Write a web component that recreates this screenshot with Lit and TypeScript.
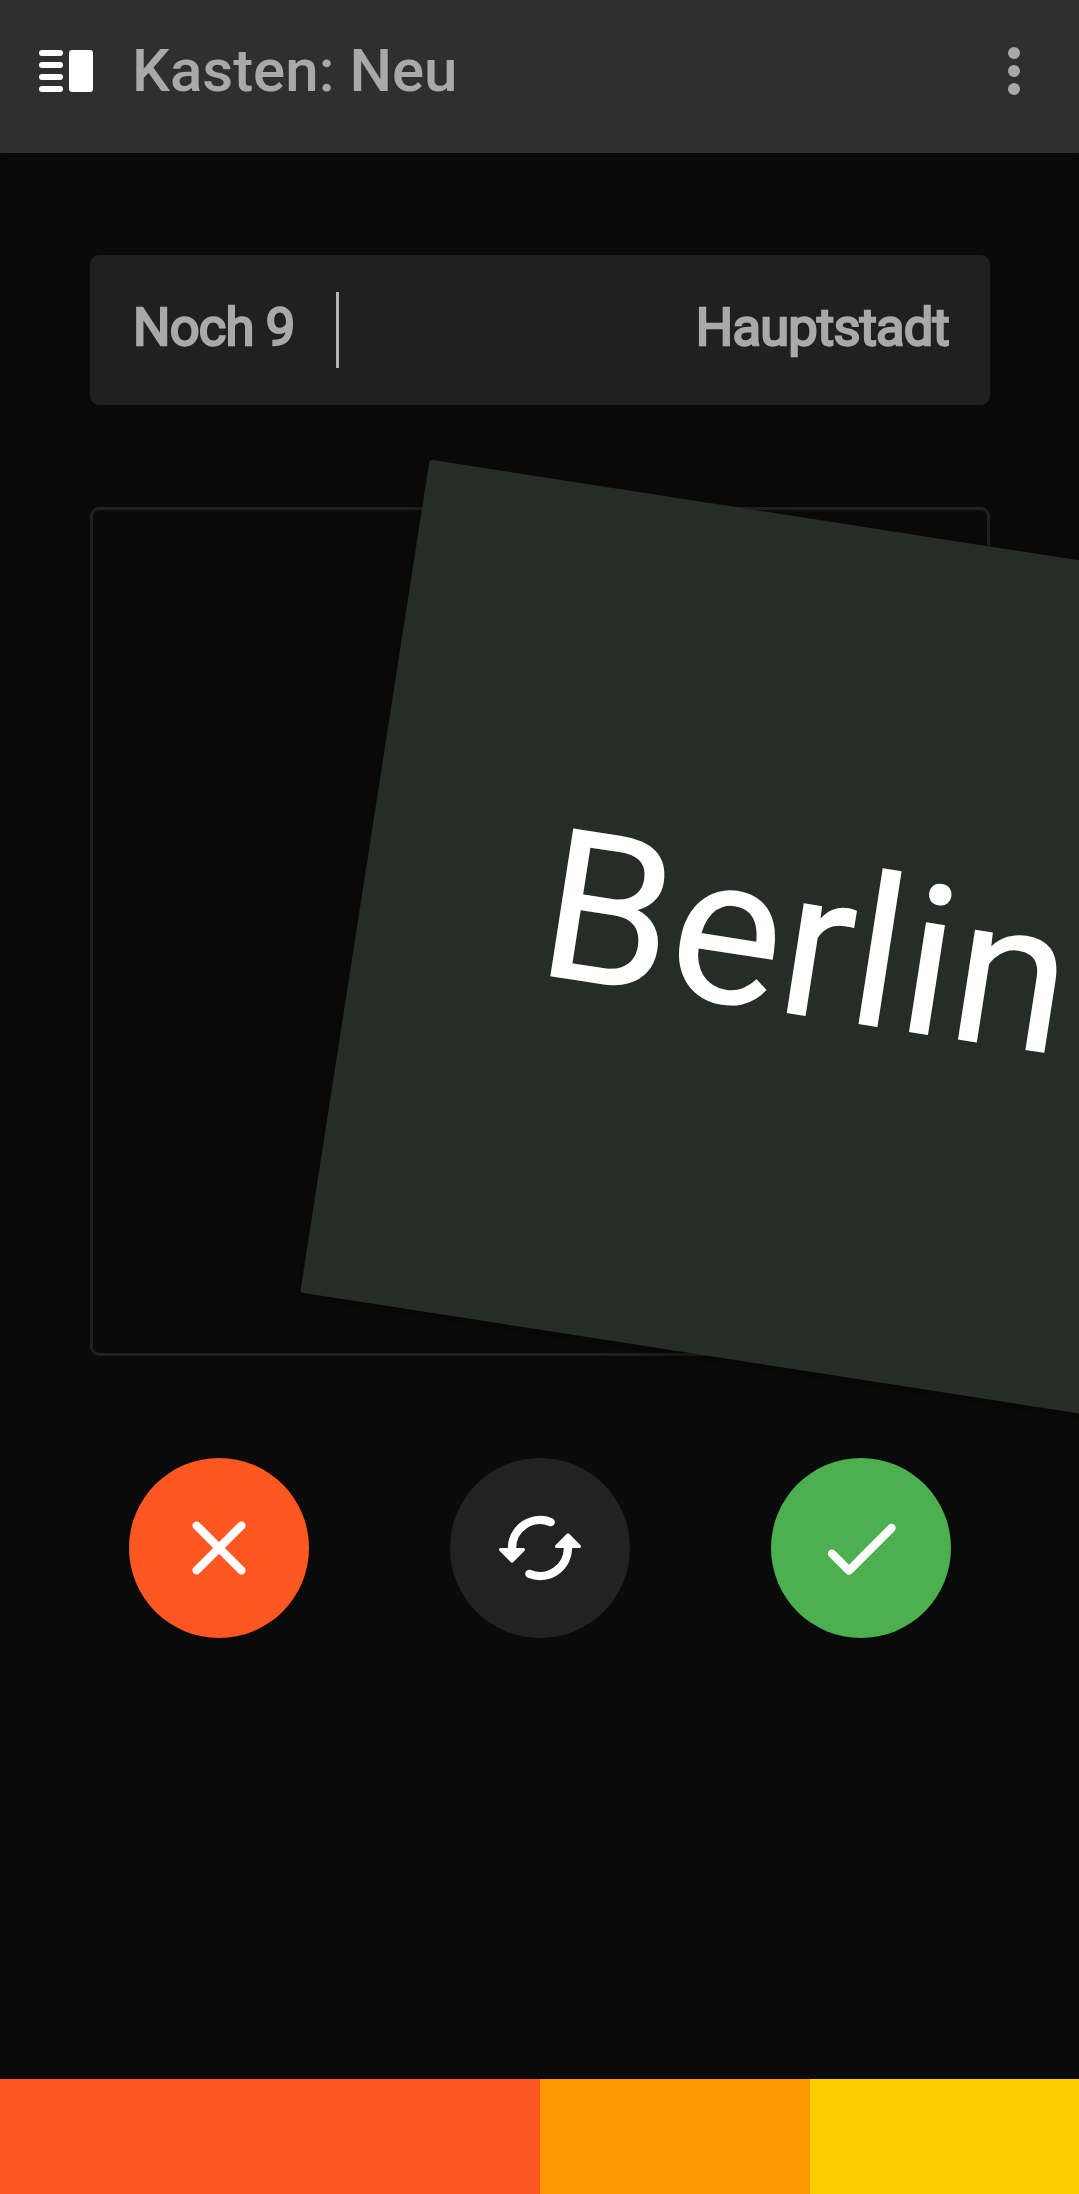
import { LitElement, html, css, svg } from "lit";
import { customElement, property } from "lit/decorators.js";

const icons = {
  cross: svg`<path class="line" d="M-22.4-22.4 22.4 22.4M22.4-22.4-22.4 22.4"/>`,
  flip: svg`
    <path class="line" d="M-28 2V0A28 28 0 0 1 10.6-25.9"/>
    <path class="line" d="M28-2V0A28 28 0 0 1-10.6 25.9"/>
    <path class="head" d="M-39.4 1.6H-16.6L-28 13Z"/>
    <path class="head" d="M39.4-1.6H16.6L28-13Z"/>`,
  check: svg`<path class="line" d="M-29 5.6-12 22.6 30.5-20"/>`,
};

@customElement("round-button")
export class RoundButton extends LitElement {
  @property() icon: keyof typeof icons = "cross";
  @property() label = "";

  static styles = css`
    :host {
      display: block;
      width: 180px;
      height: 180px;
    }
    .button {
      display: flex;
      align-items: center;
      justify-content: center;
      width: 100%;
      height: 100%;
      padding: 0;
      border: 0;
      border-radius: 50%;
      background: var(--fill);
    }
    .line {
      fill: none;
      stroke: #fff;
      stroke-width: 8.4;
      stroke-linecap: round;
      stroke-linejoin: round;
    }
    .head {
      fill: #fff;
      stroke: #fff;
      stroke-width: 3.2;
      stroke-linejoin: round;
    }
  `;

  render() {
    return html`<button class="button" aria-label=${this.label}>
      <svg width="108" height="108" viewBox="-54 -54 108 108">${icons[this.icon]}</svg>
    </button>`;
  }
}

@customElement("app-root")
export class AppRoot extends LitElement {
  @property() box = "Neu";
  @property({ type: Number }) remaining = 9;
  @property() category = "Hauptstadt";
  @property() answer = "Berlin";

  static styles = css`
    :host {
      display: flex;
      flex-direction: column;
      height: 2194px;
      overflow: hidden;
      background: #0a0a0a;
      font-family: Roboto, "Liberation Sans", sans-serif;
    }
    .header {
      display: flex;
      align-items: center;
      box-sizing: border-box;
      height: 153px;
      padding: 0 57px 11px 39px;
      background: #2f2f2f;
      box-shadow: 0 1px 5px rgba(0, 0, 0, 0.4);
      flex: none;
    }
    .title {
      flex: 1;
      margin: 0 0 0 39px;
      font-size: 60px;
      line-height: 70px;
      font-weight: 500;
      color: #a9a9a9;
    }
    .icon {
      display: block;
    }
    .main {
      display: flex;
      flex-direction: column;
      flex: 1;
      padding: 102px 89px 0 90px;
    }
    .info {
      display: flex;
      align-items: center;
      box-sizing: border-box;
      height: 150px;
      padding: 0 41px 0 43px;
      border-radius: 9px;
      background: #202020;
      color: #a9a9a9;
      font-size: 52.5px;
      line-height: 64px;
      letter-spacing: -0.8px;
      -webkit-text-stroke: 2.3px #a9a9a9;
    }
    .text {
      padding-bottom: 6px;
    }
    .divider {
      width: 3px;
      height: 76px;
      margin-left: 41.5px;
      background: #b4b4b4;
    }
    .category {
      margin-left: auto;
    }
    .slot {
      display: flex;
      height: 843px;
      margin-top: 102px;
      border: 3px solid #202020;
      border-radius: 9px;
    }
    .card {
      display: flex;
      flex: 1;
      align-items: center;
      justify-content: center;
      box-sizing: border-box;
      padding-bottom: 3px;
      border-radius: 3px;
      background: #262c26;
      box-shadow: 0 5px 12px rgba(0, 0, 0, 0.4);
      color: #fff;
      font-size: 210px;
      line-height: 246px;
      transform: translate(266.6px, 13.1px) rotate(8.83deg);
    }
    .actions {
      display: flex;
      justify-content: space-between;
      padding: 102px 39px 0;
    }
    .wrong {
      --fill: #ff5722;
    }
    .turn {
      --fill: #222;
    }
    .right {
      --fill: #4caf50;
    }
    .boxes {
      display: grid;
      grid-template-columns: 540px 270px 1fr;
      height: 115px;
      flex: none;
    }
    .first {
      background: #ff5722;
    }
    .second {
      background: #ff9800;
    }
    .third {
      background: #ffce00;
    }
  `;

  render() {
    return html`
      <header class="header">
        <svg class="icon" width="54" height="42" viewBox="0 0 54 42" fill="#fff">
          ${[0, 12, 24, 36].map((y) => svg`<rect y=${y} width="24" height="6" rx="3"/>`)}
          <rect x="30" width="24" height="42" rx="3" />
        </svg>
        <h1 class="title">Kasten: ${this.box}</h1>
        <svg class="icon" width="16" height="48" viewBox="-8 -24 16 48" fill="#a9a9a9">
          ${[-18, 0, 18].map((y) => svg`<circle cy=${y} r="6"/>`)}
        </svg>
      </header>
      <main class="main">
        <section class="info">
          <span class="text">Noch ${this.remaining}</span>
          <span class="divider"></span>
          <span class="text category">${this.category}</span>
        </section>
        <section class="slot">
          <div class="card">${this.answer}</div>
        </section>
        <nav class="actions">
          <round-button class="wrong" icon="cross" label="Falsch"></round-button>
          <round-button class="turn" icon="flip" label="Umdrehen"></round-button>
          <round-button class="right" icon="check" label="Richtig"></round-button>
        </nav>
      </main>
      <footer class="boxes">
        <div class="first"></div>
        <div class="second"></div>
        <div class="third"></div>
      </footer>
    `;
  }
}
